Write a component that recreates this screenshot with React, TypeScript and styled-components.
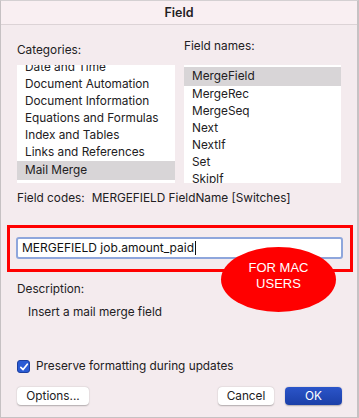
import * as React from "react";
import styled, { createGlobalStyle } from "styled-components";

const GlobalStyle = createGlobalStyle`
  html, body {
    margin: 0;
    padding: 0;
    background: #ffffff;
  }
  * {
    box-sizing: border-box;
  }
`;

const categories = [
  "Date and Time",
  "Document Automation",
  "Document Information",
  "Equations and Formulas",
  "Index and Tables",
  "Links and References",
  "Mail Merge",
];

const fieldNames = ["MergeField", "MergeRec", "MergeSeq", "Next", "NextIf", "Set", "SkipIf"];

export default function App(): JSX.Element {
  return (
    <>
      <GlobalStyle />
      <Window>
        <TitleBar>Field</TitleBar>
        <Body>
          <Columns>
            <Column>
              <Label gap={7}>Categories:</Label>
              <List>
                <ListInner shift={-6}>
                  {categories.map(c => (
                    <Item key={c} selected={c === "Mail Merge"}>
                      {c}
                    </Item>
                  ))}
                </ListInner>
              </List>
            </Column>
            <Column>
              <Label gap={11}>Field names:</Label>
              <List>
                <ListInner shift={2}>
                  {fieldNames.map(f => (
                    <Item key={f} selected={f === "MergeField"}>
                      {f}
                    </Item>
                  ))}
                </ListInner>
              </List>
            </Column>
          </Columns>

          <CodesRow>
            <span>Field codes:</span>
            <span>MERGEFIELD FieldName [Switches]</span>
          </CodesRow>

          <Highlight>
            <CodeInput>
              MERGEFIELD job.amount_paid<Caret />
            </CodeInput>
          </Highlight>

          <SectionLabel>Description:</SectionLabel>
          <DescriptionText>Insert a mail merge field</DescriptionText>

          <CheckRow>
            <CheckBox>
              <svg width="10" height="10" viewBox="0 0 10 10">
                <path
                  d="M1.8 5.3 L4.1 7.6 L8.3 2.2"
                  fill="none"
                  stroke="#ffffff"
                  strokeWidth="1.7"
                  strokeLinecap="round"
                  strokeLinejoin="round"
                />
              </svg>
            </CheckBox>
            <span>Preserve formatting during updates</span>
          </CheckRow>

          <ButtonRow>
            <Button width={72}>Options...</Button>
            <Spacer />
            <Button width={56}>Cancel</Button>
            <Button width={57} primary>
              OK
            </Button>
          </ButtonRow>
        </Body>

        <Badge>
          FOR MAC
          <br />
          USERS
        </Badge>
      </Window>
    </>
  );
}

const Window = styled.div`
  position: relative;
  width: 359px;
  height: 418px;
  background: #f4ebee;
  border: 1px solid #c6c1c3;
  border-right-width: 2px;
  border-top-color: #d4d0d2;
  font-family: Inter, "Noto Sans", sans-serif;
  font-size: 11.8px;
  color: #222022;
  display: flex;
  flex-direction: column;
  overflow: hidden;
`;

const TitleBar = styled.div`
  height: 24px;
  flex: none;
  background: #f9eff2;
  border-bottom: 1px solid #dcd3d6;
  display: flex;
  align-items: center;
  justify-content: center;
  font-weight: 600;
  font-size: 12.5px;
`;

const Body = styled.div`
  flex: 1;
  display: flex;
  flex-direction: column;
  padding: 0 15px 0 16px;
`;

const Columns = styled.div`
  display: grid;
  grid-template-columns: 158px 157px;
  column-gap: 9px;
  height: 158px;
  align-items: end;
`;

const Column = styled.div`
  display: flex;
  flex-direction: column;
`;

const Label = styled.div<{ gap: number }>`
  line-height: 15px;
  margin-bottom: ${p => p.gap}px;
`;

const List = styled.div`
  height: 118px;
  background: #ffffff;
  overflow: hidden;
`;

const ListInner = styled.div<{ shift: number }>`
  margin-top: ${p => p.shift}px;
`;

const Item = styled.div<{ selected?: boolean }>`
  height: 17px;
  line-height: 17px;
  padding-left: 8px;
  white-space: nowrap;
  background: ${p => (p.selected ? "#d8d5d7" : "transparent")};
  ${p => (p.selected ? "height: 19px; line-height: 19px;" : "")}
`;

const CodesRow = styled.div`
  display: flex;
  gap: 7px;
  margin-top: 8px;
  line-height: 15px;
`;

const Highlight = styled.div`
  margin: 19px 0 0 -10px;
  width: 346px;
  height: 47px;
  border: 3px solid #ff0000;
  padding: 9px 7px 0 6px;
`;

const CodeInput = styled.div`
  height: 22px;
  background: #ffffff;
  border: 2px solid #8ea6dc;
  border-radius: 3px;
  padding-left: 4px;
  line-height: 18px;
  font-size: 12px;
  color: #111;
  display: flex;
  align-items: center;
`;

const Caret = styled.span`
  display: inline-block;
  width: 1px;
  height: 14px;
  background: #111;
  margin-left: 1px;
`;

const SectionLabel = styled.div`
  margin-top: 10px;
  line-height: 15px;
`;

const DescriptionText = styled.div`
  margin: 8px 0 0 11px;
  line-height: 15px;
`;

const CheckRow = styled.div`
  display: flex;
  align-items: center;
  gap: 6px;
  margin-top: 39px;
  line-height: 15px;
`;

const CheckBox = styled.span`
  width: 13px;
  height: 13px;
  border-radius: 3px;
  background: #2a5bd4;
  border: 1px solid #1d3f9e;
  display: flex;
  align-items: center;
  justify-content: center;
`;

const ButtonRow = styled.div`
  display: flex;
  align-items: center;
  gap: 11px;
  margin-top: 13px;
`;

const Spacer = styled.div`
  flex: 1;
`;

const Button = styled.div<{ width: number; primary?: boolean }>`
  width: ${p => p.width}px;
  height: 18px;
  border-radius: 4px;
  display: flex;
  align-items: center;
  justify-content: center;
  background: ${p => (p.primary ? "linear-gradient(#2b55c9, #1b3fa8)" : "#ffffff")};
  color: ${p => (p.primary ? "#ffffff" : "#222022")};
  box-shadow: 0 0.5px 1.5px rgba(0, 0, 0, 0.28);
`;

const Badge = styled.div`
  position: absolute;
  left: 220px;
  top: 246px;
  width: 115px;
  height: 65px;
  border-radius: 50%;
  background: #ff0000;
  color: #ffffff;
  font-family: "Liberation Sans", Arial, sans-serif;
  font-size: 13px;
  line-height: 16px;
  text-align: center;
  display: flex;
  align-items: center;
  justify-content: center;
  padding-bottom: 8px;
`;
